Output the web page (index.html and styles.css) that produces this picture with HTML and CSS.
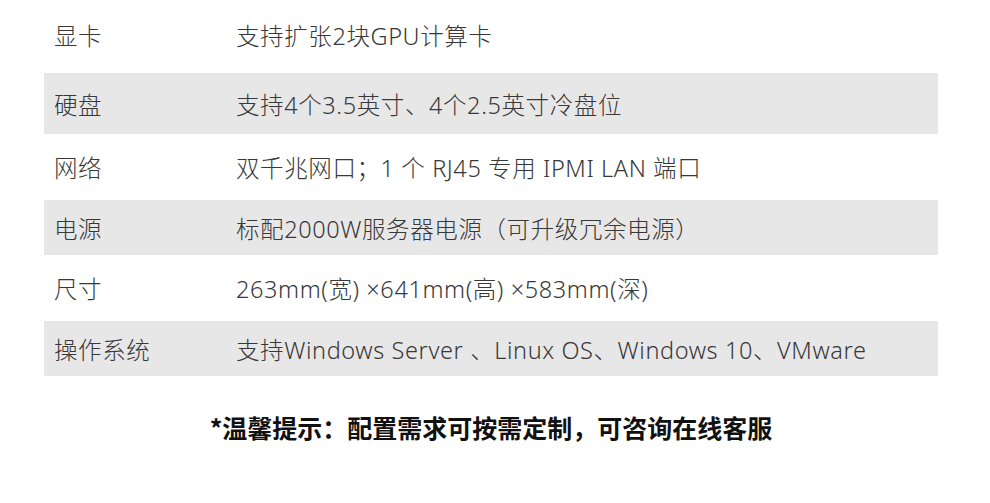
FILE: index.html
```html
<!DOCTYPE html>
<html lang="zh-CN">
<head>
<meta charset="utf-8">
<link rel="stylesheet" href="styles.css">
</head>
<body>
<div class="page">
  <div class="spec">
    <div class="row r1"><div class="label">显卡</div><div class="value">支持扩张2块GPU计算卡</div></div>
    <div class="row r2 shade"><div class="label">硬盘</div><div class="value">支持4个3.5英寸、4个2.5英寸冷盘位</div></div>
    <div class="row r3"><div class="label">网络</div><div class="value">双千兆网口；1 个 RJ45 专用 IPMI LAN 端口</div></div>
    <div class="row r4 shade"><div class="label">电源</div><div class="value">标配2000W服务器电源（可升级冗余电源）</div></div>
    <div class="row r5"><div class="label">尺寸</div><div class="value">263mm(宽) ×641mm(高) ×583mm(深)</div></div>
    <div class="row r6 shade"><div class="label">操作系统</div><div class="value">支持Windows Server 、Linux OS、Windows 10、VMware</div></div>
  </div>
  <div class="note">*温馨提示：配置需求可按需定制，可咨询在线客服</div>
</div>
</body>
</html>
```
FILE: styles.css
```css
html, body {
  margin: 0;
  padding: 0;
  background: #ffffff;
}
.page {
  width: 990px;
  height: 503px;
  padding: 0 52px 0 44px;
  box-sizing: border-box;
  font-family: "Noto Sans", "Noto Sans CJK SC", sans-serif;
  color: #383838;
}
.spec {
  display: flex;
  flex-direction: column;
}
.row {
  display: grid;
  grid-template-columns: 182px 1fr;
  align-items: center;
  padding-left: 10px;
  font-size: 23.5px;
  font-weight: 300;
  letter-spacing: 0.6px;
}
.shade { background: #e8e7e8; }
.r1 { height: 73px; padding-bottom: 3px; box-sizing: border-box; }
.r2 { height: 61px; }
.r3 { height: 66px; }
.r4 { height: 55px; }
.r5 { height: 66px; }
.r6 { height: 55px; }
.note {
  margin-top: 36px;
  text-align: center;
  font-family: "Noto Sans CJK SC", sans-serif;
  font-size: 25px;
  font-weight: 700;
  color: #111111;
  line-height: 30px;
}
```
